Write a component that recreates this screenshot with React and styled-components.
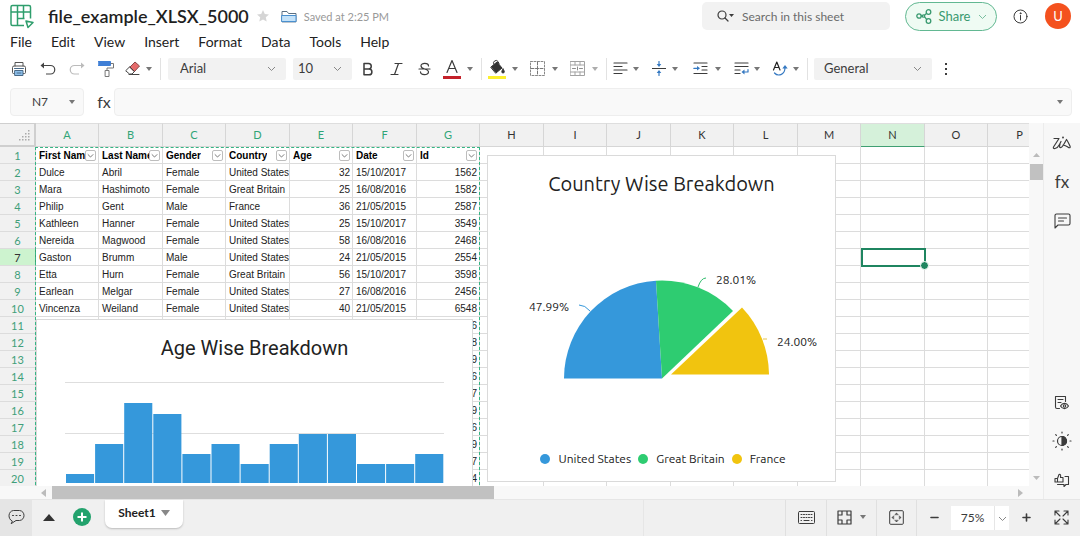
import React from "react";
import styled, { createGlobalStyle } from "styled-components";

const GREEN = "#23a26d";
const INK = "#3c3c3c";
const UI = `Lato, "Noto Sans", sans-serif`;
const CHART = `Ubuntu, "Noto Sans", sans-serif`;

const Global = createGlobalStyle`
  *, *::before, *::after { box-sizing: border-box; }
  html, body, #root { height: 100%; margin: 0; }
  body { font-family: ${UI}; color: ${INK}; background: #fff; overflow: hidden; }
  button, input, select { font: inherit; color: inherit; }
  button { border: 0; padding: 0; background: none; display: flex; align-items: center; justify-content: center; }
  svg { display: block; flex: none; }
`;

const Page = styled.div`
  display: flex;
  flex-direction: column;
  height: 100vh;
`;

/* ---------- header ---------- */
const Header = styled.header`
  display: flex;
  align-items: center;
  height: 32px;
  padding: 0 9px;
`;
const FileName = styled.h1`
  margin: 0 0 0 13px;
  font-size: 18px;
  line-height: 24px;
  font-weight: 600;
  color: #1f1f1f;
`;
const IconButton = styled.button`
  width: ${(p) => p.$w || 28}px;
  height: 24px;
  color: ${(p) => p.$color || INK};
`;
const Saved = styled.span`
  font-size: 11px;
  color: #999;
  margin-left: 3px;
`;
const Spacer = styled.div`
  flex: 1;
`;
const Search = styled.label`
  display: flex;
  align-items: center;
  gap: 8px;
  width: 188px;
  height: 28px;
  padding-left: 15px;
  border-radius: 5px;
  background: #f2f2f2;
`;
const SearchInput = styled.input`
  flex: 1;
  min-width: 0;
  border: 0;
  padding: 0;
  background: none;
  font-size: 12px;
  &::placeholder { color: #6b6b6b; opacity: 1; }
`;
const Share = styled.button`
  gap: 7px;
  width: 92px;
  height: 29px;
  margin-left: 15px;
  border: 1px solid #62b892;
  border-radius: 15px;
  background: #effbf3;
  color: #3a9a70;
  font-size: 13px;
`;
const Avatar = styled.button`
  width: 26px;
  height: 26px;
  margin-left: 2px;
  border-radius: 50%;
  background: #f4511e;
  color: #fff;
  font-size: 13px;
`;

/* ---------- menu ---------- */
const Menu = styled.nav`
  display: flex;
  gap: 19px;
  height: 20px;
  padding-left: 10px;
`;
const MenuItem = styled.button`
  font-size: 14px;
  line-height: 20px;
  color: #222;
`;

/* ---------- tool bar ---------- */
const Toolbar = styled.div`
  display: flex;
  align-items: center;
  height: 33px;
  padding-left: 5px;
`;
const Group = styled.div`
  display: flex;
  align-items: center;
  gap: ${(p) => p.$gap || 0}px;
  padding-left: ${(p) => p.$pad || 0}px;
`;
const Split = styled.button`
  gap: 4px;
  height: 24px;
  padding: 0 3px;
  opacity: ${(p) => (p.$off ? 0.6 : 1)};
`;
const SplitIcon = styled.span`
  display: flex;
  justify-content: center;
  width: ${(p) => (p.$wide ? 22 : 18)}px;
`;
const Divider = styled.span`
  width: 1px;
  height: 22px;
  margin: 0 1px 0 5px;
  background: #e2e2e2;
`;
const SelectBox = styled.span`
  display: flex;
  align-items: center;
  width: ${(p) => p.$w}px;
  height: 22px;
  margin-left: ${(p) => p.$gap}px;
  padding-right: 10px;
  border-radius: 2px;
  background: #f2f2f2;
`;
const Select = styled.select`
  flex: 1;
  min-width: 0;
  height: 22px;
  border: 0;
  padding: 0 0 2px ${(p) => p.$pad}px;
  appearance: none;
  background: none;
  font-size: 13px;
  line-height: 20px;
`;

/* ---------- formula bar ---------- */
const FormulaBar = styled.div`
  display: flex;
  align-items: center;
  height: 38px;
  padding: 0 8px 4px 10px;
`;
const Field = styled.div`
  display: flex;
  align-items: center;
  flex: ${(p) => (p.$grow ? "1" : "none")};
  width: ${(p) => (p.$grow ? "auto" : "74px")};
  height: 28px;
  padding-right: 8px;
  border: 1px solid #eee;
  border-radius: 4px;
  background: #f9f9f9;
`;
const FieldInput = styled.input`
  flex: 1;
  min-width: 0;
  border: 0;
  padding: 0 4px 2px;
  background: none;
  font-size: 12px;
  text-align: ${(p) => p.$align || "left"};
`;
const FxLabel = styled.span`
  width: 30px;
  padding-left: 10px;
  text-align: center;
  font-size: 16px;
  line-height: 24px;
`;

/* ---------- work area ---------- */
const Work = styled.main`
  display: flex;
  flex: 1;
  min-height: 0;
`;
const SheetColumn = styled.div`
  display: flex;
  flex-direction: column;
  flex: 1;
  min-width: 0;
`;
const SheetRow = styled.div`
  display: flex;
  flex: 1;
  min-height: 0;
`;
const Sheet = styled.div`
  position: relative;
  flex: 1;
  min-width: 0;
  overflow: hidden;
`;
const Table = styled.table`
  width: 0;
  table-layout: fixed;
  border-collapse: separate;
  border-spacing: 0;
`;
const RowHeadCol = styled.col`
  width: 36px;
`;
const Col = styled.col`
  width: ${(p) => (p.$odd ? 64 : 63)}px;
`;
const Corner = styled.td`
  height: 24px;
  padding: 0 3px 2px 0;
  border: solid #cfcfcf;
  border-width: 1px 2px 2px 0;
  background: #f1f1f1;
  svg { margin-left: auto; margin-top: 4px; }
`;
const ColHead = styled.th`
  height: 24px;
  padding: 0;
  border-top: 1px solid #dedede;
  border-right: 1px solid #d6d6d6;
  border-bottom: ${(p) => (p.$active ? "1px solid #3f9f72" : "1px solid #d6d6d6")};
  background: ${(p) => (p.$active ? "#d5f1da" : "#f1f1f1")};
  color: ${(p) => (p.$used ? "#2fa577" : "#333")};
  font-size: 11px;
  line-height: 14px;
  font-weight: 400;
`;
const RowHead = styled.th`
  height: 17px;
  padding: 1px 0 0;
  border-right: 1px solid ${(p) => (p.$active ? "#3f9f72" : "#cfcfcf")};
  border-bottom: 1px solid #dcdcdc;
  background: ${(p) => (p.$active ? "#cdf3cf" : "#f1f1f1")};
  color: ${(p) => (p.$active ? "#333" : "#3f9f7a")};
  font-size: 11px;
  line-height: 14px;
  font-weight: 400;
`;
const Cell = styled.td`
  height: 17px;
  padding: 1px 2px 0 3px;
  border-right: 1px solid #dcdcdc;
  border-bottom: 1px solid #dcdcdc;
  overflow: hidden;
  white-space: nowrap;
  text-align: ${(p) => (p.$right ? "right" : "left")};
  font-family: "Liberation Sans", Arial, sans-serif;
  font-size: 10px;
  line-height: 14px;
  color: #222;
`;
const FilterHead = styled.div`
  display: flex;
  align-items: center;
  justify-content: space-between;
  font-weight: 700;
  color: #000;
`;
const Clip = styled.span`
  overflow: hidden;
`;
const FilterButton = styled.button`
  flex: none;
  width: 11px;
  height: 11px;
  border: 1px solid #bdbdbd;
  border-radius: 2px;
  background: #fff;
`;
const RangeOutline = styled.div`
  position: absolute;
  top: 24px;
  left: 35px;
  width: 445px;
  height: 100%;
  border: 1px dashed #36b584;
  border-bottom: 0;
  pointer-events: none;
`;
const CellCursor = styled.div`
  position: absolute;
  top: 125px;
  left: 861px;
  width: 65px;
  height: 19px;
  border: 2px solid #1f8560;
`;
const FillHandle = styled.span`
  position: absolute;
  right: -5px;
  bottom: -5px;
  width: 9px;
  height: 9px;
  border: 1px solid #fff;
  border-radius: 50%;
  background: #1f8560;
`;
const ChartPanel = styled.section`
  position: absolute;
  left: ${(p) => p.$x}px;
  top: ${(p) => p.$y}px;
  width: ${(p) => p.$w}px;
  height: ${(p) => p.$h}px;
  border: 1px solid #dadada;
  background: #fff;
`;
const ChartTitle = styled.h2`
  margin: 0;
  padding-top: 14px;
  text-align: center;
  font-family: ${(p) => p.$font};
  font-size: 20px;
  line-height: 28px;
  font-weight: 400;
  color: #222;
`;
const Legend = styled.ul`
  display: flex;
  justify-content: center;
  gap: 7px;
  margin: 0;
  padding: 0 0 0 3px;
  list-style: none;
  font-family: ${CHART};
  font-size: 12px;
  line-height: 18px;
  color: #222;
`;
const LegendItem = styled.li`
  display: flex;
  align-items: center;
  gap: 8px;
  &::before {
    content: "";
    width: 10px;
    height: 10px;
    border-radius: 50%;
    background: ${(p) => p.$c};
  }
`;
const PieLabel = styled.text`
  font-family: ${CHART};
  font-size: 12px;
  fill: #222;
`;

/* ---------- scroll bars ---------- */
const VScroll = styled.div`
  display: flex;
  flex-direction: column;
  align-items: center;
  width: 14px;
  padding: 30px 0 6px;
  background: #f8f8f8;
`;
const VThumb = styled.span`
  width: 13px;
  height: 16px;
  margin-top: 7px;
  background: #c1c1c1;
`;
const HScroll = styled.div`
  display: flex;
  align-items: center;
  height: 13px;
  padding: 0 20px 0 41px;
  background: #f8f8f8;
`;
const HThumb = styled.span`
  width: 45%;
  height: 13px;
  margin-left: 6px;
  background: #c1c1c1;
`;
const Side = styled.aside`
  display: flex;
  flex-direction: column;
  align-items: center;
  width: 37px;
  padding: 8px 0 7px;
  gap: 15px;
  border-left: 1px solid #ececec;
  background: #f7f7f7;
`;
const SideFx = styled.span`
  font-size: 17px;
  line-height: 24px;
`;

/* ---------- status bar ---------- */
const Footer = styled.footer`
  display: flex;
  align-items: center;
  height: 37px;
  background: #f0f0f0;
  border-top: 1px solid #e6e6e6;
`;
const FootCell = styled.button`
  gap: 8px;
  width: ${(p) => p.$w}px;
  height: 36px;
  padding-bottom: 2px;
  border-left: ${(p) => (p.$line ? "1px solid #e0e0e0" : "0")};
  background: ${(p) => (p.$dark ? "#e5e5e5" : "none")};
`;
const FootGap = styled.span`
  width: 142px;
  height: 36px;
  border-left: 1px solid #e6e6e6;
`;
const Tab = styled.button`
  align-self: flex-start;
  gap: 5px;
  width: 78px;
  height: 28px;
  margin-left: 7px;
  padding-bottom: 3px;
  border-radius: 0 0 7px 7px;
  background: #fff;
  box-shadow: 0 1px 2px #bbb;
  font-size: 12px;
  font-weight: 700;
  color: #222;
`;
const ZoomBox = styled.div`
  display: flex;
  width: 58px;
  height: 24px;
  background: #fff;
`;
const ZoomInput = styled.input`
  width: 43px;
  border: 0;
  padding: 0 0 2px;
  background: none;
  text-align: center;
  font-size: 12px;
`;
const ZoomDrop = styled.button`
  flex: 1;
  border-left: 1px solid #e6e6e6;
`;

/* ---------- drawings ---------- */
const Ico = ({ w = 18, h = w, vb = `0 0 ${w} ${h}`, sw = 1, children }) => (
  <svg width={w} height={h} viewBox={vb} fill="none" stroke="currentColor" strokeWidth={sw} strokeLinecap="round" strokeLinejoin="round" aria-hidden="true">
    {children}
  </svg>
);
const Caret = ({ w = 6, h = 4, c = "#777", up }) => (
  <svg width={w} height={h} viewBox="0 0 6 4" preserveAspectRatio="none" aria-hidden="true">
    <path d={up ? "M0 4 3 0l3 4z" : "M0 0h6L3 4z"} fill={c} />
  </svg>
);
const Chevron = ({ w = 9, c = "#888" }) => (
  <svg width={w} height={w} viewBox="0 0 9 9" fill="none" stroke={c} strokeWidth="1" aria-hidden="true">
    <path d="M1 3l3.500 3.500L8 3" />
  </svg>
);

const Logo = () => (
  <svg width="26" height="26" viewBox="0 0 26 26" fill="none" stroke="#2f9e6d" strokeWidth="1.500" strokeLinejoin="round" aria-hidden="true">
    <path d="M15 22.500H3.500a1.500 1.500 0 0 1-1.500-1.500V4a1.500 1.500 0 0 1 1.500-1.500h16.500a1.500 1.500 0 0 1 1.500 1.500V15.500M2 9h19.500M8.500 2.500v20M8.500 15.500h7M14.500 2.500v13" />
    <path d="M17 18l7 1.500-5 5z" fill="#fff" />
  </svg>
);
const Star = () => (
  <Ico w={12}><path fill="#d5d5d5" stroke="none" d="M6 0l1.800 4 4.200.4-3.200 2.900.9 4.300L6 9.400l-3.700 2.200.9-4.300L0 4.400 4.200 4z" /></Ico>
);
const Folder = () => (
  <Ico w={16} h={13}>
    <path d="M1 11.500V1.500h5l1.500 2H15v8z" stroke="#5b6f82" fill="#fff" />
    <path d="M1 5.500h14v6H1z" fill="#c4e2f9" stroke="#4a90cf" />
  </Ico>
);
const SearchIcon = () => (
  <Ico w={17} h={12} sw={1.2}>
    <circle cx="5" cy="5" r="4" /><path d="M8 8l3 3" />
    <path d="M12 4h5l-2.500 3z" fill="currentColor" stroke="none" />
  </Ico>
);
const ShareIcon = () => (
  <Ico w={16} h={15} sw={1.3}>
    <circle cx="3" cy="7" r="2.200" /><circle cx="12.500" cy="3" r="2.300" /><circle cx="12.500" cy="12" r="2.300" />
    <circle cx="7.500" cy="7" r="1.200" /><path d="M8.500 6.300l2-1.900M8.600 7.900l2 2.500M5.200 7h1" />
  </Ico>
);
const Info = () => (
  <Ico w={15}><circle cx="7.500" cy="7.500" r="6.500" /><path d="M7.500 6.500v4.500" /><circle cx="7.500" cy="4.300" r=".5" fill="currentColor" /></Ico>
);
const Print = () => (
  <Ico w={16}>
    <path d="M4 5V1.500h8V5M4 12.500H2.500a1 1 0 0 1-1-1V6.500A1.500 1.500 0 0 1 3 5h10a1.500 1.500 0 0 1 1.500 1.500v5a1 1 0 0 1-1 1H12" stroke="#555" />
    <path d="M4 9.500h8v5H4z" fill="#8fc1ec" stroke="#4a6a88" /><path d="M3.500 7.500h9M6 12h4" stroke="#4a6a88" />
  </Ico>
);
const Undo = ({ flip }) => (
  <svg width="16" height="14" viewBox="0 0 16 14" fill="none" stroke={flip ? "#bbb" : "#444"} strokeWidth="1.200" aria-hidden="true">
    <g transform={flip ? "matrix(-1 0 0 1 16 0)" : undefined}>
      <path d="M2 3.500h8.500a4 4 0 0 1 0 8.500H6" /><path d="M0.500 3.500l3.500-3v6z" fill={flip ? "#bbb" : "#444"} stroke="none" />
    </g>
  </svg>
);
const Roller = () => (
  <Ico w={17} h={16}>
    <path d="M.5.5h12v4H.5z" fill="#3f7fd6" stroke="#3f7fd6" /><path d="M13 2.500h2.500v4.500H9v2.500" stroke="#777" /><path d="M7.500 9.500h3.500v6H7.500z" stroke="#777" />
  </Ico>
);
const Eraser = () => (
  <Ico w={16} h={15}>
    <path d="M5 6l5-5 4.500 4-5 5.500z" fill="#e56a6a" stroke="#8a4a4a" /><path d="M5 6l4.500 4.500L7 13H4.500L1 10zM4 13.500h10" stroke="#444" />
  </Ico>
);
const BoldI = () => <Ico w={12} h={14} sw={1.5}><path d="M2 1.500h4.500a2.700 2.700 0 0 1 0 5.500H2zM2 7h5a2.900 2.900 0 0 1 0 5.800H2z" /></Ico>;
const ItalicI = () => <Ico w={13} h={14} sw={1.2}><path d="M5 1.500h7M1 12.500h7M8.500 1.500l-4 11" /></Ico>;
const StrikeI = () => <Ico w={13} h={14} sw={1.2}><path d="M10.500 4c0-3.500-7.500-3.500-7.500-.3C3 6 5 6.500 6.500 7c2.500.6 4 1.300 4 3 0 3.500-8 3.500-8-.2M1 7h11" /></Ico>;
const FontColor = () => <Ico w={18} h={20} sw={1.2}><path d="M4 13.500L9 1.500l5 12M5.700 9.500h6.600" /><path d="M0 17h18v3H0z" fill="#c4212a" stroke="none" /></Ico>;
const FillColor = () => (
  <Ico w={18} h={20}>
    <path d="M3 8l6-5 5 6-6 5z" fill="#333" stroke="#333" /><path d="M6 5.500a2.500 2.500 0 0 1 4-3l1 2" stroke="#333" />
    <path d="M15 10c2 2.500 1.500 4 0 4s-1.800-1.500 0-4z" fill="#333" /><path d="M0 17h18v3H0z" fill="#fdf02c" stroke="none" />
  </Ico>
);
const Borders = () => (
  <Ico w={15}><path d="M.5.5h14v14H.5z" strokeDasharray="2 1.500" stroke="#888" /><path d="M7.500 1v13M1 7.500h13" strokeDasharray="3 1.500" stroke="#777" /></Ico>
);
const Merge = () => (
  <Ico w={15}><path d="M.5.5h14v14H.5zM.5 4h14M.5 11h14M5 .5V4M10 .5V4M5 11v3.500M10 11v3.500" stroke="#666" /><path d="M2.500 7.500h3M12.500 7.500h-3M7.500 6v3" stroke="#444" /></Ico>
);
const AlignI = () => <Ico w={15} h={13} sw={1.2}><path d="M1 1h13M1 4.500h8M1 8h13M1 11.500h8" /></Ico>;
const VAlign = () => (
  <Ico w={14} h={15} sw={1.2}><path d="M.5 7.500h13" /><path d="M7 .5V4M7 14.500V11" stroke="#3579c2" /><path d="M4.700 3h4.600L7 6zM4.700 12h4.600L7 9z" fill="#3579c2" stroke="none" /></Ico>
);
const Indent = () => (
  <Ico w={15} h={13} sw={1.2}><path d="M1 1h13M9 4.500h5M9 8h5M1 11.500h13" /><path d="M.8 6.300H5" stroke="#3579c2" /><path d="M4 4l3 2.300-3 2.300z" fill="#3579c2" stroke="none" /></Ico>
);
const Wrap = () => (
  <Ico w={15} h={13} sw={1.2}><path d="M1 1h13M1 4.500h13M1 8h5M1 11.500h5" /><path d="M14 7.500V10h-4" stroke="#3579c2" /><path d="M10.500 7.500L7.500 10l3 2.500z" fill="#3579c2" stroke="none" /></Ico>
);
const Rotate = () => (
  <Ico w={16} h={15} sw={1.2}><path d="M1.500 9L4.800 1l3.200 8M2.800 6.500h4.200" stroke="#222" /><path d="M2.500 12c3 3.500 10.500 2.500 10.500-5.500" stroke="#3579c2" /><path d="M10.300 7.500L13 4l2.700 3.500z" fill="#3579c2" stroke="none" /></Ico>
);
const More = () => <Ico w={4} h={14}><path fill="currentColor" stroke="none" d="M1 1h2v2H1zM1 6h2v2H1zM1 11h2v2H1z" /></Ico>;
const CornerDots = () => (
  <svg width="12" height="11" viewBox="0 0 12 11" fill="#aaa" aria-hidden="true">
    {[0, 1, 2, 3].flatMap((r) => [0, 1, 2, 3].filter((c) => c + r >= 3).map((c) => <rect key={`${r}${c}`} x={c * 3} y={r * 3} width="1.500" height="1.500" />))}
  </svg>
);
const Zia = () => (
  <Ico w={20} h={16} sw={1.2}>
    <path d="M2 3.500h5L1.500 12c-.6 1.200.3 1.800 1.500 1.500 2-.5 3.500-2 4.500-4L9 6.500M8 9c-.8 2.500-.5 4 1 3.500C11 12 13 7 14.500 4.500c1.500 2 2.500 4.500 3.500 6.500.8 1.800-.5 2.200-2 1.200-1.500-1-2.500-1.700-5-2.200" /><circle cx="11" cy="2.500" r=".4" />
  </Ico>
);
const Comment = () => <Ico w={17} h={16} sw={1.1}><path d="M1 15V2.500A1.500 1.500 0 0 1 2.500 1h12A1.500 1.500 0 0 1 16 2.500v8a1.500 1.500 0 0 1-1.500 1.500H4zM4.500 5h8M4.500 8h5" /></Ico>;
const DocEye = () => (
  <Ico w={16} h={15} sw={1.1}><path d="M5.500 13.500H3a1.500 1.500 0 0 1-1.500-1.500V1.500h10v5M4 4.500h5M4 7.500h3" /><path d="M6.500 11c2-3.500 6-3.500 8 0-2 3.500-6 3.500-8 0z" /><circle cx="10.500" cy="11" r="1.200" /></Ico>
);
const Sun = () => (
  <Ico w={20} sw={1.2}><circle cx="10" cy="10" r="4.500" /><path d="M10 5.500a4.500 4.500 0 0 1 0 9z" fill="currentColor" /><path d="M10 1v1M10 18v1M1 10h1M18 10h1M3.700 3.700l.7.7M15.600 15.600l.7.7M3.700 16.300l.7-.7M15.600 4.400l.7-.7" /></Ico>
);
const Feedback = () => (
  <Ico w={16} h={15} sw={1.1}><path d="M1 5.500h2.500L5 1.500c1.500-.5 2 .5 1.500 3H9V9H1zM3.500 5.500V9" /><path d="M11 3.500h3.500v8H12l-2 2v-2H3.500" /></Ico>
);
const Chat = () => (
  <Ico w={17} h={16}><path d="M4 12C-.500 10 0 2 5.500 1.500h6C17.500 2 17.500 11 11.500 11.500H8L3.500 14.500z" /><path d="M4.500 6.500h1M8 6.500h1M11.500 6.500h1" /></Ico>
);
const Plus = () => (
  <svg width="18" height="18" viewBox="0 0 18 18" aria-hidden="true"><circle cx="9" cy="9" r="9" fill={GREEN} /><path d="M9 4.500v9M4.500 9h9" stroke="#fff" strokeWidth="2" /></svg>
);
const Keyboard = () => (
  <Ico w={17} h={13}><rect x=".5" y=".5" width="16" height="12" rx="1" /><path d="M3 3.500h11M3 6.500h11" strokeDasharray="1 1.500" /><path d="M3 9.500h.5M6 9.500h5M13.500 9.500h.5" /></Ico>
);
const Freeze = () => (
  <Ico w={15} sw={1.2}><path d="M1 1h13v13H1zM5 1v4H1M10 1v4h4M5 14v-4H1M10 14v-4h4" /></Ico>
);
const Fit = () => (
  <Ico w={15}><rect x=".7" y=".7" width="13.600" height="13.600" rx="1" /><path d="M6 4.500L7.500 3 9 4.500zM6 10.500L7.500 12 9 10.500zM4.500 6L3 7.500 4.500 9zM10.500 6L12 7.500 10.500 9z" fill="currentColor" strokeWidth=".5" /></Ico>
);
const Expand = () => (
  <Ico w={15} sw={1.1}><path d="M1 5V1h4M1 1l5 5M10 1h4v4M14 1L9 6M1 10v4h4M1 14l5-5M14 10v4h-4M14 14L9 9" /></Ico>
);

/* ---------- data ---------- */
const columns = "ABCDEFGHIJKLMNOP".split("");
const fields = ["First Name", "Last Name", "Gender", "Country", "Age", "Date", "Id"];
const people = [
  ["Dulce", "Abril", "Female", "United States", "32", "15/10/2017", "1562"],
  ["Mara", "Hashimoto", "Female", "Great Britain", "25", "16/08/2016", "1582"],
  ["Philip", "Gent", "Male", "France", "36", "21/05/2015", "2587"],
  ["Kathleen", "Hanner", "Female", "United States", "25", "15/10/2017", "3549"],
  ["Nereida", "Magwood", "Female", "United States", "58", "16/08/2016", "2468"],
  ["Gaston", "Brumm", "Male", "United States", "24", "21/05/2015", "2554"],
  ["Etta", "Hurn", "Female", "Great Britain", "56", "15/10/2017", "3598"],
  ["Earlean", "Melgar", "Female", "United States", "27", "16/08/2016", "2456"],
  ["Vincenza", "Weiland", "Female", "United States", "40", "21/05/2015", "6548"],
  ...["6", "8", "9", "6", "7", "9", "6", "9", "7", "4"].map((id) => ["", "", "", "", "", "", id]),
];
const bars = [9, 39, 80, 69, 29, 39, 19, 39, 49, 49, 19, 19, 29];

const Dropdown = ({ label, value, w, gap, pad }) => (
  <SelectBox $w={w} $gap={gap}>
    <Select aria-label={label} $pad={pad} defaultValue={value}><option>{value}</option></Select>
    <Chevron />
  </SelectBox>
);
const Tool = ({ label, wide, off, children }) => (
  <Split aria-label={label} $off={off}><SplitIcon $wide={wide}>{children}</SplitIcon><Caret /></Split>
);

const Grid = () => (
  <Table>
    <colgroup>
      <RowHeadCol />
      {columns.map((c, i) => <Col key={c} $odd={i % 2 === 1} />)}
    </colgroup>
    <thead>
      <tr>
        <Corner><CornerDots /></Corner>
        {columns.map((c, i) => <ColHead key={c} scope="col" $used={i < 7} $active={c === "N"}>{c}</ColHead>)}
      </tr>
    </thead>
    <tbody>
      <tr>
        <RowHead scope="row">1</RowHead>
        {columns.map((c, i) => (
          <Cell key={c}>
            {fields[i] && (
              <FilterHead><Clip>{fields[i]}</Clip><FilterButton aria-label={`Filter ${fields[i]}`}><Chevron w={7} c="#555" /></FilterButton></FilterHead>
            )}
          </Cell>
        ))}
      </tr>
      {people.map((row, r) => (
        <tr key={r}>
          <RowHead scope="row" $active={r === 5}>{r + 2}</RowHead>
          {columns.map((c, i) => <Cell key={c} $right={i === 4 || i === 6}>{row[i]}</Cell>)}
        </tr>
      ))}
    </tbody>
  </Table>
);

const AgeChart = () => (
  <ChartPanel $x={36} $y={196} $w={437} $h={300}>
    <ChartTitle $font="Roboto, sans-serif">Age Wise Breakdown</ChartTitle>
    <svg width="435" height="140" viewBox="0 0 435 140" role="img" aria-label="Bar chart of ages">
      <path d="M28 20.500h379M28 71.500h379" stroke="#dedede" />
      {bars.map((h, i) => <rect key={i} x={29 + i * 29.1} y={121 - h} width="28.100" height={h} fill="#3598db" />)}
    </svg>
  </ChartPanel>
);

const CountryChart = () => (
  <ChartPanel $x={487} $y={32} $w={349} $h={327}>
    <ChartTitle $font={CHART}>Country Wise Breakdown</ChartTitle>
    <svg width="347" height="252" viewBox="0 0 347 252" role="img" aria-label="Pie chart of countries">
      <path d="M174 180.500H76A98 98 0 0 1 168 82.700z" fill="#3598db" />
      <path d="M174 180.500L168 82.700A98 98 0 0 1 245 113z" fill="#2ecc71" />
      <path d="M183 176.500L254 109.500A98 98 0 0 1 281 176.500z" fill="#f1c40f" />
      <path d="M102 113q-5-6-11-6" stroke="#3598db" fill="none" />
      <path d="M210 89q3-9 8-9" stroke="#2ebc6b" fill="none" />
      <path d="M275 141h4" stroke="#e6c44a" fill="none" />
      <PieLabel x="41" y="113">47.99%</PieLabel>
      <PieLabel x="228" y="86">28.01%</PieLabel>
      <PieLabel x="289" y="148">24.00%</PieLabel>
    </svg>
    <Legend>
      <LegendItem $c="#3598db">United States</LegendItem>
      <LegendItem $c="#2ecc71">Great Britain</LegendItem>
      <LegendItem $c="#f1c40f">France</LegendItem>
    </Legend>
  </ChartPanel>
);

export default function App() {
  return (
    <Page>
      <Global />
      <Header>
        <Logo />
        <FileName>file_example_XLSX_5000</FileName>
        <IconButton $w={28} aria-label="Favourite"><Star /></IconButton>
        <IconButton $w={24} aria-label="Folder"><Folder /></IconButton>
        <Saved>Saved at 2:25 PM</Saved>
        <Spacer />
        <Search>
          <SearchIcon />
          <SearchInput aria-label="Search" placeholder="Search in this sheet" />
        </Search>
        <Share><ShareIcon />Share<Chevron c="#79bfa0" /></Share>
        <IconButton $w={46} aria-label="Information"><Info /></IconButton>
        <Avatar>U</Avatar>
      </Header>
      <Menu aria-label="Main menu">
        {["File", "Edit", "View", "Insert", "Format", "Data", "Tools", "Help"].map((m) => <MenuItem key={m}>{m}</MenuItem>)}
      </Menu>
      <Toolbar>
        <Group $gap={1}>
          <IconButton aria-label="Print"><Print /></IconButton>
          <IconButton aria-label="Undo"><Undo /></IconButton>
          <IconButton aria-label="Redo"><Undo flip /></IconButton>
          <IconButton aria-label="Format painter"><Roller /></IconButton>
          <Tool label="Clear"><Eraser /></Tool>
        </Group>
        <Divider />
        <Dropdown label="Font" value="Arial" w={118} gap={6} pad={12} />
        <Dropdown label="Font size" value="10" w={59} gap={7} pad={5} />
        <Group $pad={2}>
          <IconButton aria-label="Bold"><BoldI /></IconButton>
          <IconButton aria-label="Italic"><ItalicI /></IconButton>
          <IconButton aria-label="Strikethrough"><StrikeI /></IconButton>
          <Tool label="Font colour" wide><FontColor /></Tool>
        </Group>
        <Divider />
        <Group $gap={2}>
          <Tool label="Fill colour" wide><FillColor /></Tool>
          <Tool label="Borders" wide><Borders /></Tool>
          <Tool label="Merge" wide off><Merge /></Tool>
        </Group>
        <Divider />
        <Group $gap={5}>
          <Tool label="Horizontal align"><AlignI /></Tool>
          <Tool label="Vertical align"><VAlign /></Tool>
          <Tool label="Indent" wide><Indent /></Tool>
          <Tool label="Text wrap"><Wrap /></Tool>
          <Tool label="Text rotation"><Rotate /></Tool>
        </Group>
        <Divider />
        <Dropdown label="Number format" value="General" w={118} gap={5} pad={10} />
        <IconButton aria-label="More"><More /></IconButton>
      </Toolbar>
      <FormulaBar>
        <Field>
          <FieldInput aria-label="Cell name" defaultValue="N7" $align="center" />
          <Caret />
        </Field>
        <FxLabel>fx</FxLabel>
        <Field $grow>
          <FieldInput aria-label="Formula" />
          <Caret />
        </Field>
      </FormulaBar>
      <Work>
        <SheetColumn>
          <SheetRow>
            <Sheet>
              <Grid />
              <RangeOutline />
              <AgeChart />
              <CountryChart />
              <CellCursor><FillHandle /></CellCursor>
            </Sheet>
            <VScroll>
              <Caret w={7} up c="#bbb" />
              <VThumb />
              <Spacer />
              <Caret w={7} c="#bbb" />
            </VScroll>
          </SheetRow>
          <HScroll>
            <svg width="5" height="8" viewBox="0 0 5 8" aria-hidden="true"><path d="M5 0v8L0 4z" fill="#bbb" /></svg>
            <HThumb />
            <Spacer />
            <svg width="5" height="8" viewBox="0 0 5 8" aria-hidden="true"><path d="M0 0v8l5-4z" fill="#bbb" /></svg>
          </HScroll>
        </SheetColumn>
        <Side>
          <IconButton aria-label="Assistant"><Zia /></IconButton>
          <IconButton aria-label="Functions"><SideFx>fx</SideFx></IconButton>
          <IconButton aria-label="Comments"><Comment /></IconButton>
          <Spacer />
          <IconButton aria-label="View options"><DocEye /></IconButton>
          <IconButton aria-label="Theme"><Sun /></IconButton>
          <IconButton aria-label="Feedback"><Feedback /></IconButton>
        </Side>
      </Work>
      <Footer>
        <FootCell $w={32} $dark aria-label="Chat"><Chat /></FootCell>
        <FootCell $w={34} aria-label="All sheets"><Caret w={12} h={7} up c="#333" /></FootCell>
        <FootCell $w={32} aria-label="Add sheet"><Plus /></FootCell>
        <Tab>Sheet1<Caret w={9} h={6} c="#888" /></Tab>
        <Spacer />
        <FootGap />
        <FootCell $w={41} $line aria-label="Keyboard"><Keyboard /></FootCell>
        <FootCell $w={50} $line aria-label="Freeze panes"><Freeze /><Caret /></FootCell>
        <FootCell $w={40} $line aria-label="Fit"><Fit /></FootCell>
        <FootCell $w={35} $line aria-label="Zoom out"><Ico w={9} h={9} sw={1.6}><path d="M1 4.500h7" /></Ico></FootCell>
        <ZoomBox>
          <ZoomInput aria-label="Zoom" defaultValue="75%" />
          <ZoomDrop aria-label="Zoom levels"><Chevron /></ZoomDrop>
        </ZoomBox>
        <FootCell $w={34} aria-label="Zoom in"><Ico w={9} h={9} sw={1.6}><path d="M1 4.500h7M4.500 1v7" /></Ico></FootCell>
        <FootCell $w={37} aria-label="Full screen"><Expand /></FootCell>
      </Footer>
    </Page>
  );
}
